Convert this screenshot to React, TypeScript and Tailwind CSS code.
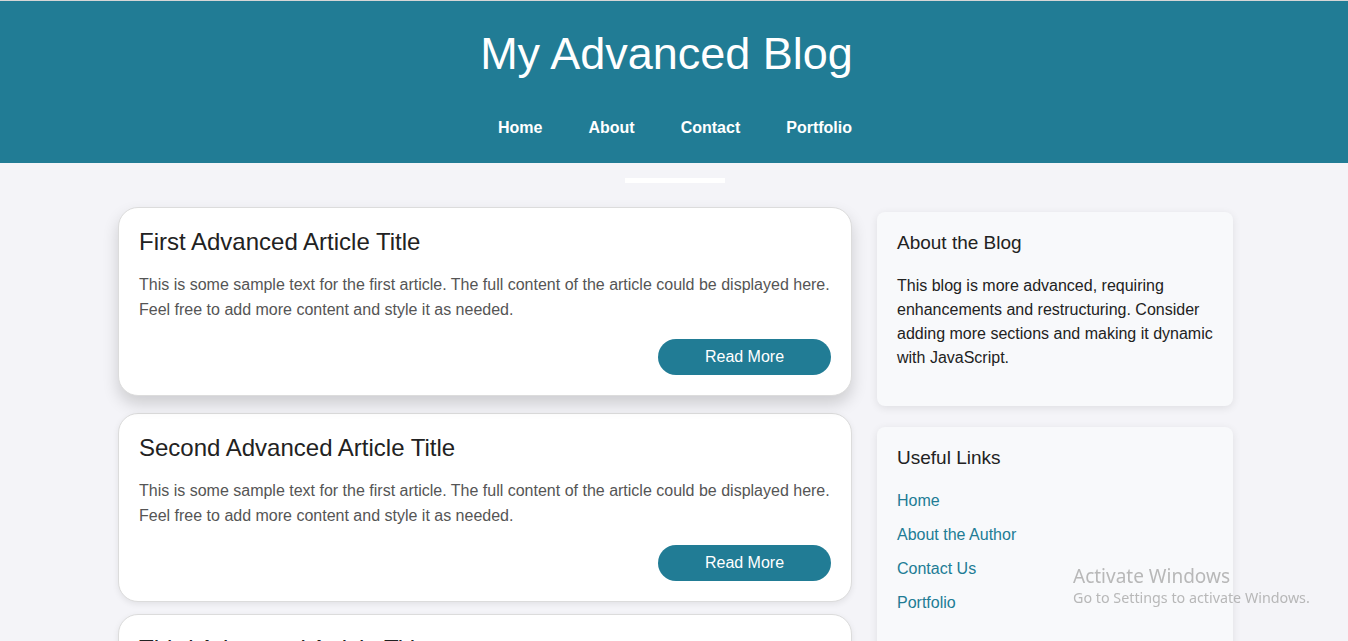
export default function App() {
    const articles = [
        { title: 'First Advanced Article Title', hovered: true },
        { title: 'Second Advanced Article Title', hovered: false },
        { title: 'Third Advanced Article Title', hovered: false },
    ];

    return (
        <div className="min-h-screen bg-[#f4f4f8] border-t border-[#d6d6d6] font-['Liberation_Sans',Arial,sans-serif] overflow-hidden">
            {/* Header */}
            <header className="h-[162px] bg-[#217c95] text-white flex flex-col items-center pt-[27px]">
                <h1 className="text-[45px] leading-[51px] pr-[15px]">My Advanced Blog</h1>
                <nav className="mt-[37px] pl-[2px] flex gap-[46px] text-[16px] leading-6 font-bold">
                    <a href="#">Home</a>
                    <a href="#">About</a>
                    <a href="#">Contact</a>
                    <a href="#">Portfolio</a>
                </nav>
            </header>
            <div className="mx-auto mt-[15px] h-[5px] w-[100px] bg-white translate-x-px" />

            {/* Main */}
            <div className="ml-[118px] mt-[29px] w-[1115px] flex gap-[25px] items-start">
                <div className="w-[734px] flex flex-col gap-3">
                    {articles.map((a) => (
                        <article
                            key={a.title}
                            className={`bg-white border border-[#dcdcdc] rounded-[20px] p-5 ${a.hovered ? '-translate-y-[5px] shadow-[0_8px_16px_rgba(0,0,0,0.16)]' : 'shadow-[0_2px_6px_rgba(0,0,0,0.08)]'}`}
                        >
                            <h2 className="text-[24px] leading-[28px] text-[#222]">{a.title}</h2>
                            <p className="mt-4 text-[16px] leading-[25px] text-[#555]">
                                This is some sample text for the first article. The full content of the article could be displayed here. Feel free to add more content and style it as needed.
                            </p>
                            <div className="mt-[17px] flex justify-end">
                                <button className="w-[173px] h-[36px] rounded-full bg-[#217c95] text-white text-[16px]">
                                    Read More
                                </button>
                            </div>
                        </article>
                    ))}
                </div>

                {/* Sidebar */}
                <aside className="w-[356px] flex flex-col gap-[21px]">
                    <div className="bg-[#f8f9fb] rounded-lg p-5 shadow-[0_2px_8px_rgba(0,0,0,0.09)]">
                        <h3 className="text-[19px] leading-[22px] text-[#222]">About the Blog</h3>
                        <p className="mt-5 mb-4 text-[16px] leading-6 text-[#222]">
                            This blog is more advanced, requiring enhancements and restructuring. Consider adding more sections and making it dynamic with JavaScript.
                        </p>
                    </div>
                    <div className="bg-[#f8f9fb] rounded-lg p-5 shadow-[0_2px_8px_rgba(0,0,0,0.09)]">
                        <h3 className="text-[19px] leading-[22px] text-[#222]">Useful Links</h3>
                        <ul className="mt-5 mb-4 flex flex-col gap-[10px] text-[16px] leading-6 text-[#217c95]">
                            <li><a href="#">Home</a></li>
                            <li><a href="#">About the Author</a></li>
                            <li><a href="#">Contact Us</a></li>
                            <li><a href="#">Portfolio</a></li>
                        </ul>
                    </div>
                </aside>
            </div>

            {/* Windows activation watermark */}
            <div className="fixed left-[1073px] top-[563px] text-[#a8a8a8]/80 font-['Noto_Sans',sans-serif] pointer-events-none">
                <div className="text-[19px] leading-[26px]">Activate Windows</div>
                <div className="text-[14.3px] leading-[18px]">Go to Settings to activate Windows.</div>
            </div>
        </div>
    );
}
